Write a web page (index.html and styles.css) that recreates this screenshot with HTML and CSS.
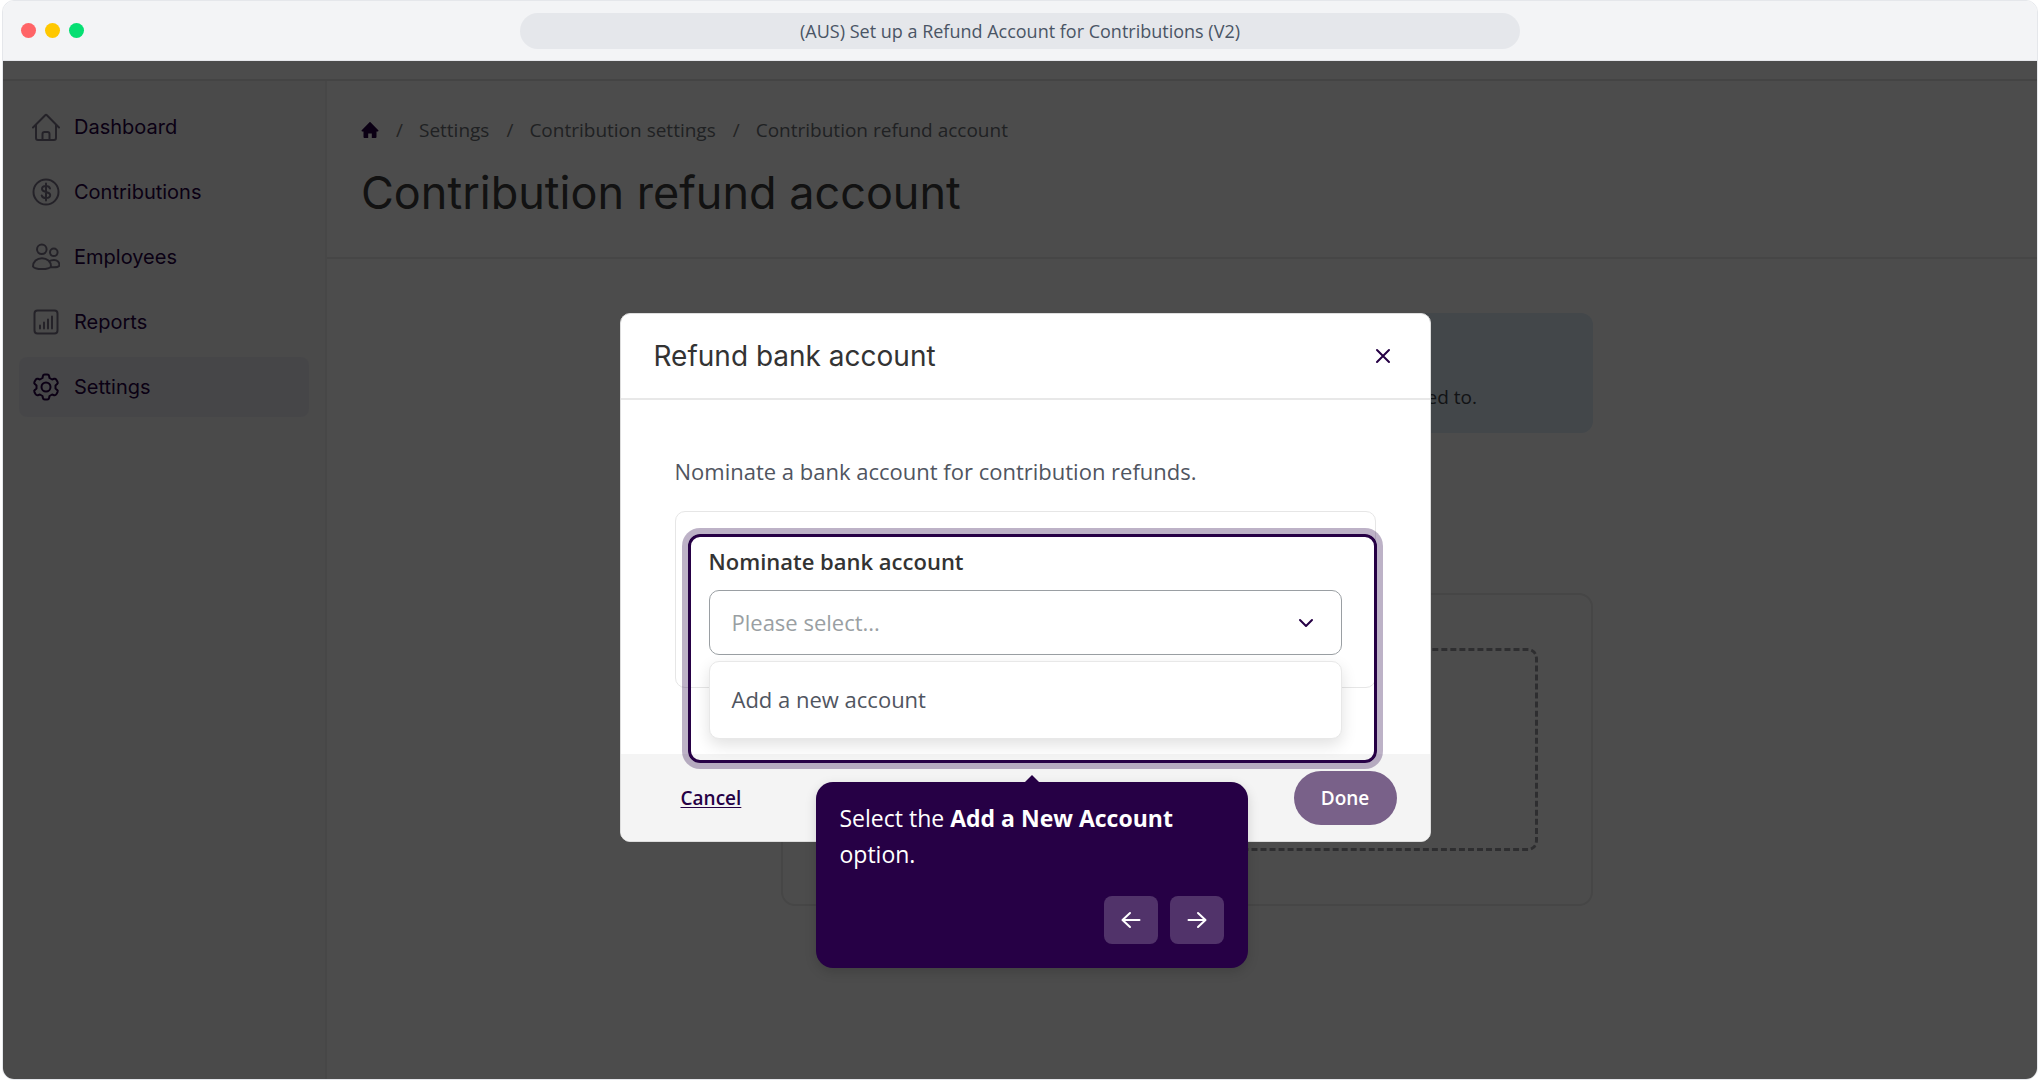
FILE: index.html
```html
<!DOCTYPE html>
<html lang="en">
<head>
<meta charset="utf-8">
<meta name="viewport" content="width=device-width, initial-scale=1">
<title>(AUS) Set up a Refund Account for Contributions (V2)</title>
<link rel="stylesheet" href="styles.css">
</head>
<body>
<div class="window">
  <header class="titlebar">
    <div class="lights">
      <span class="light light-red"></span>
      <span class="light light-yellow"></span>
      <span class="light light-green"></span>
    </div>
    <div class="address">(AUS) Set up a Refund Account for Contributions (V2)</div>
  </header>

  <div class="stage">
    <div class="app">
      <div class="topbar"></div>
      <nav class="sidebar" aria-label="Main">
        <a class="nav-item" href="#dashboard">
          <svg class="nav-icon" viewBox="0 0 28 28"><path d="M1 14.500 13.200 2.200a1.200 1.200 0 0 1 1.700 0L27 14.500M4 12v13a2 2 0 0 0 2 2h16a2 2 0 0 0 2-2V12M10.500 27v-6a2 2 0 0 1 2-2h3a2 2 0 0 1 2 2v6"/></svg>
          <span>Dashboard</span>
        </a>
        <a class="nav-item" href="#contributions">
          <svg class="nav-icon" viewBox="0 0 28 28"><circle cx="14" cy="14" r="12.500"/><path d="M18 10.500c-.5-1.600-2-2.400-4-2.400-2.400 0-4 1.100-4 2.900 0 4 8.200 2 8.200 6 0 1.900-1.700 3-4.200 3-2.300 0-3.900-.9-4.300-2.600M14 5.500v17"/></svg>
          <span>Contributions</span>
        </a>
        <a class="nav-item" href="#employees">
          <svg class="nav-icon" viewBox="0 0 28 28"><circle cx="9.800" cy="6.300" r="4.800"/><circle cx="21.800" cy="9.300" r="3.800"/><path d="M1 23.500c0-4.800 3.800-8.300 9-8.300s9 3.500 9 8.300c-1 1.700-4.500 2.600-9 2.600s-8-.9-9-2.600ZM17.200 18.300c1.100-.9 2.700-1.400 4.800-1.400 3.200 0 5.500 2.400 5.500 5.600-.9 1.400-3.400 2.200-8.500 1.700"/></svg>
          <span>Employees</span>
        </a>
        <a class="nav-item" href="#reports">
          <svg class="nav-icon" viewBox="0 0 28 28"><rect x="2.500" y="2.500" width="23" height="23" rx="3"/><path d="M8 20.500v-3M12 20.500v-6M16 20.500v-9M20 20.500V8.500"/></svg>
          <span>Reports</span>
        </a>
        <a class="nav-item nav-item-active" href="#settings" aria-current="page">
          <svg class="nav-icon" viewBox="0 0 28 28"><path d="M12.700 1.500h2.600q1.500 0 1.800 1.500l.4 2 2.600 1.500 2-.7q1.400-.4 2.200.9l1.200 2.100q.8 1.400-.4 2.300l-1.600 1.400v3l1.600 1.400q1.200.9.400 2.300l-1.200 2.100q-.8 1.300-2.200.9l-2-.7-2.600 1.500-.4 2q-.3 1.500-1.800 1.500h-2.600q-1.500 0-1.800-1.500l-.4-2-2.600-1.500-2 .7q-1.400.4-2.200-.9l-1.200-2.100q-.8-1.400.4-2.300l1.600-1.400v-3l-1.600-1.400q-1.200-.9-.4-2.300l1.200-2.100q.8-1.300 2.200-.9l2 .7 2.600-1.500.4-2q.3-1.500 1.800-1.500Z"/><circle cx="14" cy="14" r="4.500"/></svg>
          <span>Settings</span>
        </a>
      </nav>

      <main class="main">
        <div class="page-head">
          <ol class="crumbs">
            <li><a href="#home" aria-label="Home"><svg class="crumb-home" viewBox="0 0 18 18"><path d="M9 .8 17.300 9.300c.5.500.2 1.200-.5 1.200H15.500V16q0 1-1 1H10.800v-4.500H7.200V17H3.500q-1 0-1-1v-5.500H1.200c-.7 0-1-.7-.5-1.200Z"/></svg></a></li>
            <li><a href="#settings">Settings</a></li>
            <li><a href="#contribution-settings">Contribution settings</a></li>
            <li><a href="#refund-account">Contribution refund account</a></li>
          </ol>
          <h1>Contribution refund account</h1>
        </div>
        <div class="content">
          <p class="notice">Nominate the account your contribution refunds will be credited to.</p>
          <section class="panel"><div class="dropzone"></div></section>
        </div>
      </main>
    </div>

    <div class="overlay">
      <div class="modal" role="dialog" aria-labelledby="modal-title">
        <div class="modal-head">
          <h2 id="modal-title">Refund bank account</h2>
          <button class="close" type="button" aria-label="Close"><svg viewBox="0 0 16 16"><path d="M2 2l12 12M14 2 2 14"/></svg></button>
        </div>
        <div class="modal-body">
          <p class="intro">Nominate a bank account for contribution refunds.</p>
          <div class="field-card">
            <label for="account">Nominate bank account</label>
            <div class="select-wrap">
              <select id="account"><option>Please select...</option></select>
              <svg class="chevron" viewBox="0 0 16 10"><path d="M2 2l6 6 6-6"/></svg>
              <div class="menu"><button class="menu-option" type="button">Add a new account</button></div>
            </div>
            <div class="spotlight"></div>
            <div class="tip" role="status">
              <p>Select the <strong>Add a New Account</strong> option.</p>
              <div class="tip-nav">
                <button type="button" aria-label="Previous step"><svg viewBox="0 0 20 18"><path d="M18.500 9H2M9 2 1.500 9 9 16"/></svg></button>
                <button type="button" aria-label="Next step"><svg viewBox="0 0 20 18"><path d="M1.500 9H18M11 2l7.500 7-7.500 7"/></svg></button>
              </div>
            </div>
          </div>
        </div>
        <div class="modal-foot">
          <a class="cancel" href="#cancel">Cancel</a>
          <button class="done" type="button">Done</button>
        </div>
      </div>
    </div>
  </div>
</div>
</body>
</html>
```
FILE: styles.css
```css
:root {
  --text-font: "Open Sans", "Noto Sans", sans-serif;
  --head-font: Inter, "Open Sans", sans-serif;
  --plum: #260045;
}

* { box-sizing: border-box; }

body {
  margin: 0;
  background: #fff;
  font-family: var(--text-font);
  color: #333;
}

h1, h2, p, ol { margin: 0; padding: 0; }
h1, h2 { font-family: var(--head-font); font-weight: 400; }
button, select { font-family: inherit; }
svg { display: block; fill: none; stroke-linecap: round; stroke-linejoin: round; }

/* Browser frame */
.window {
  display: flex;
  flex-direction: column;
  min-height: 100vh;
  margin: 0 2px;
  border: 1px solid #e5e7eb;
  border-radius: 12px;
  overflow: hidden;
}

.titlebar {
  display: grid;
  grid-template-columns: 1fr minmax(0, 1000px) 1fr;
  align-items: center;
  height: 60px;
  padding: 0 18px;
  background: #f3f4f6;
  border-bottom: 1px solid #e5e7eb;
}

.lights { display: flex; gap: 9px; }
.light { width: 15px; height: 15px; border-radius: 50%; }
.light-red { background: #ff6467; }
.light-yellow { background: #ffc800; }
.light-green { background: #05df72; }

.address {
  height: 36px;
  border-radius: 18px;
  background: #e5e7eb;
  color: #4a5565;
  font-size: 18px;
  line-height: 36px;
  text-align: center;
}

/* Application; runs slightly past the frame's right edge */
.stage {
  position: relative;
  display: flex;
  flex: 1;
}

.app {
  display: grid;
  flex: 1;
  grid-template: 20px 1fr / 324px 1fr;
  margin-right: -10px;
  background: #fff;
}

.topbar { grid-column: 1 / -1; border-bottom: 2px solid #e3e3e3; }

.sidebar {
  display: flex;
  flex-direction: column;
  gap: 5px;
  padding: 16px;
  background: #f7f7f7;
  border-right: 2px solid #eee;
}

.nav-item {
  display: flex;
  align-items: center;
  gap: 14px;
  height: 60px;
  padding: 0 13px;
  border-radius: 8px;
  color: var(--plum);
  font: 20px var(--head-font);
  text-decoration: none;
}
.nav-item-active { background: #ececf2; }

.nav-icon { width: 28px; height: 28px; stroke: #7a7388; stroke-width: 2; }
.nav-item-active .nav-icon { stroke: var(--plum); }

.page-head {
  padding: 34px 34px 0;
  height: 178px;
  border-bottom: 2px solid #eaeaea;
}

.crumbs {
  display: flex;
  align-items: center;
  list-style: none;
  font-size: 19px;
  line-height: 30px;
}
.crumbs li { display: flex; align-items: center; }
.crumbs li + li::before { content: "/"; margin: 0 16px 0 17px; color: #777; }
.crumbs a { color: #6b7075; text-decoration: none; }
.crumb-home { width: 18px; height: 18px; fill: var(--plum); }

h1 { margin-top: 18px; font-size: 45px; line-height: 60px; color: #3c3c3c; }

.content {
  display: flex;
  flex-direction: column;
  gap: 160px;
  width: 812px;
  max-width: 100%;
  margin: 54px auto;
}

.notice {
  height: 120px;
  padding: 69px 116px 0 24px;
  border-radius: 12px;
  background: #dfedf8;
  color: #3d4248;
  font-size: 19px;
  line-height: 30px;
  text-align: right;
}

.panel {
  padding: 53px;
  border: 2px solid #eaeaea;
  border-radius: 14px;
}
.dropzone { height: 203px; border: 3px dashed #9c9ca2; border-radius: 10px; }

/* Dialog */
.overlay {
  position: absolute;
  inset: 0;
  display: flex;
  justify-content: center;
  align-items: flex-start;
  padding: 252px 0 0 10px;
  background: rgba(0, 0, 0, .7);
}

.modal {
  width: 811px;
  border: 1px solid #ddd;
  border-radius: 10px;
  background: #fff;
}

.modal-head {
  display: flex;
  align-items: center;
  justify-content: space-between;
  height: 86px;
  padding: 0 39px 0 33px;
  border-bottom: 2px solid #e8e8e8;
}
h2 { font-size: 28px; line-height: 36px; color: #333; }

.close { padding: 0; border: 0; background: none; }
.close svg { width: 16px; height: 16px; stroke: var(--plum); stroke-width: 2; }

.modal-body { padding: 53px 54px 66px; }

.intro { font-size: 22px; line-height: 36px; color: #50555f; }

.field-card {
  position: relative;
  height: 177px;
  margin-top: 22px;
  padding: 31px 33px;
  border: 1px solid #e6e6e6;
  border-radius: 10px;
}
.field-card label {
  display: block;
  font-size: 22px;
  font-weight: 600;
  line-height: 36px;
}

.select-wrap { position: relative; margin-top: 11px; }
.select-wrap select {
  display: block;
  width: 100%;
  height: 65px;
  padding: 0 22px 2px;
  border: 1px solid #9a9fa3;
  border-radius: 10px;
  background: #fff;
  color: #9a9fa3;
  font-size: 22px;
  appearance: none;
}
.chevron {
  position: absolute;
  top: 28px;
  right: 28px;
  width: 16px;
  height: 10px;
  stroke: var(--plum);
  stroke-width: 2;
}

.menu {
  position: absolute;
  top: calc(100% + 6px);
  left: 0;
  right: 0;
  border: 1px solid #e8e8e8;
  border-radius: 10px;
  background: #fff;
  box-shadow: 0 6px 16px rgba(0, 0, 0, .12);
}
.menu-option {
  width: 100%;
  height: 76px;
  padding: 0 22px 2px;
  border: 0;
  background: none;
  color: #50555f;
  font-size: 22px;
  text-align: left;
}

.modal-foot {
  display: flex;
  align-items: center;
  justify-content: space-between;
  height: 87px;
  padding: 0 33px 0 60px;
  border-radius: 0 0 9px 9px;
  background: #f4f4f4;
}
.cancel {
  color: var(--plum);
  font-size: 19px;
  font-weight: 600;
  text-underline-offset: 2px;
}
.done {
  width: 103px;
  height: 54px;
  border: 0;
  border-radius: 27px;
  background: #796189;
  color: #fff;
  font-size: 19px;
  font-weight: 600;
}

/* Guided-tour highlight and tip, floating over the dialog */
.spotlight {
  position: absolute;
  top: 22px;
  left: 12px;
  right: -2px;
  height: 229px;
  border: 3px solid var(--plum);
  border-radius: 12px;
  box-shadow: 0 0 0 6px rgba(38, 0, 69, .3);
  pointer-events: none;
}

.tip {
  position: absolute;
  top: 270px;
  left: 140px;
  width: 432px;
  padding: 18px 24px 24px;
  border-radius: 17px;
  background: var(--plum);
  box-shadow: 0 4px 12px rgba(0, 0, 0, .15);
  color: #fff;
  font-size: 23px;
  line-height: 36px;
}
.tip::before {
  content: "";
  position: absolute;
  top: -7px;
  left: calc(50% - 8px);
  border: 8px solid transparent;
  border-top: 0;
  border-bottom-color: var(--plum);
}
.tip strong { font-weight: 700; }

.tip-nav { display: flex; justify-content: flex-end; gap: 12px; margin-top: 24px; }
.tip-nav button {
  display: grid;
  place-items: center;
  width: 54px;
  height: 48px;
  padding: 0;
  border: 0;
  border-radius: 8px;
  background: #51336a;
}
.tip-nav svg { width: 20px; height: 18px; stroke: #fff; stroke-width: 2; }
```
